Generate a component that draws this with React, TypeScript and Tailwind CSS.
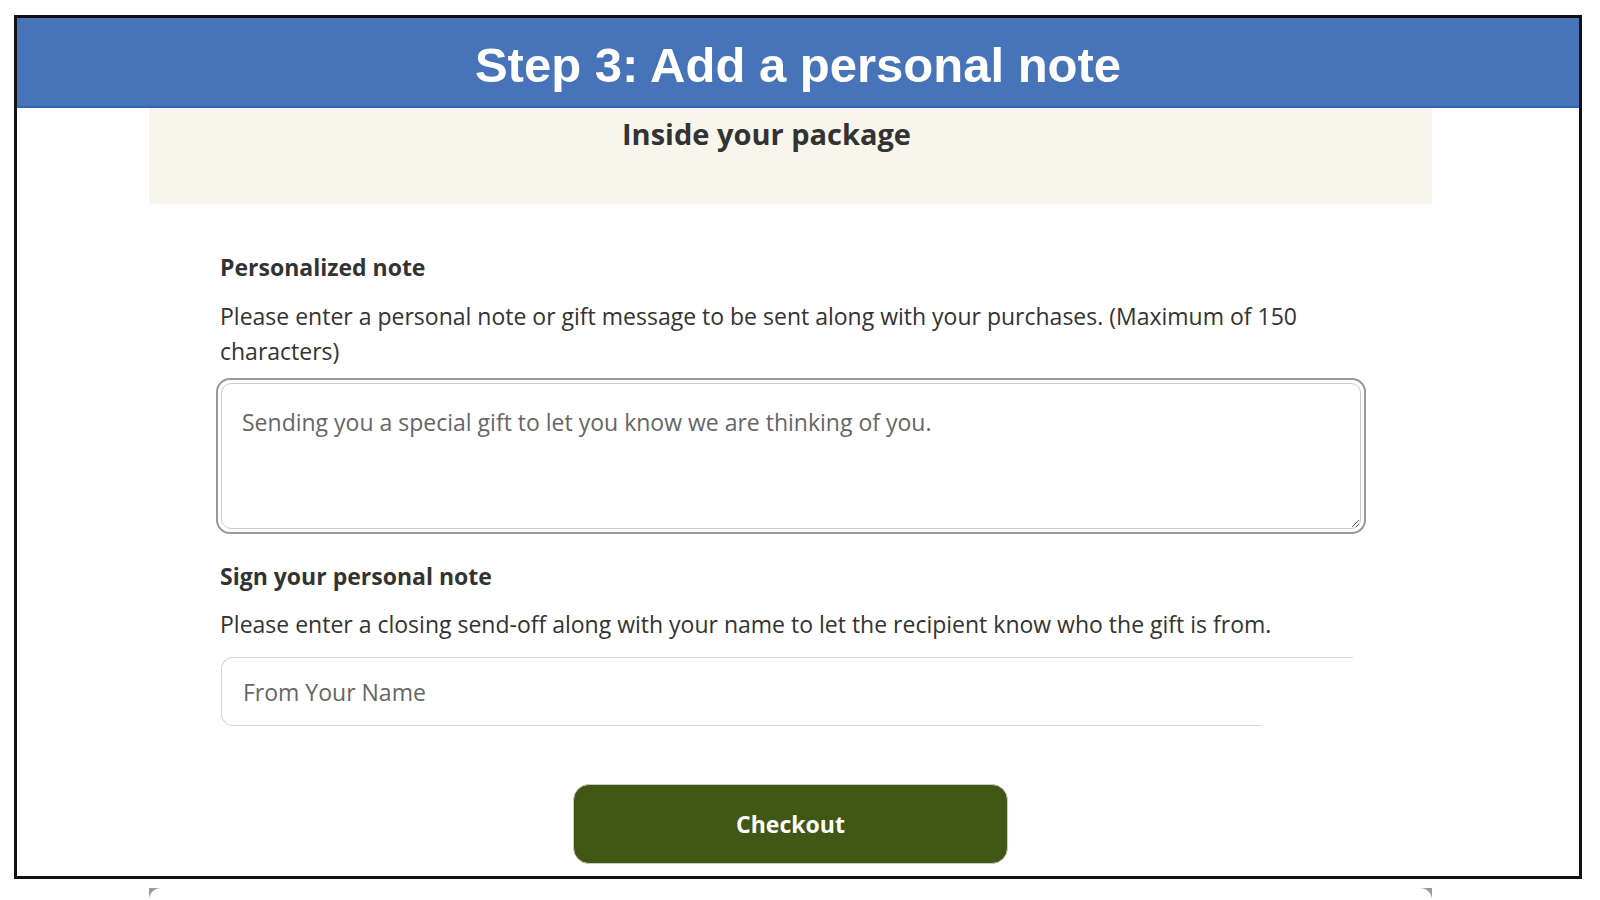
import React from "react";

const App = () => {
  return (
    <div className="w-[1600px] h-[900px] bg-white overflow-hidden pt-[15px] pl-[14px] font-['Open_Sans',sans-serif] text-[#333]">
      <div className="w-[1568px] h-[864px] border-[3px] border-[#111] flex flex-col">
        {/* header band */}
        <div className="h-[90px] bg-[#4773b9] border-b-2 border-[#2f66b6] flex items-center justify-center pt-[6px]">
          <h1 className="font-['Liberation_Sans',Arial,sans-serif] font-bold text-[49px] leading-none text-white">
            Step 3: Add a personal note
          </h1>
        </div>

        <div className="ml-[132px] w-[1283px] flex flex-col">
          <div className="h-[96px] bg-[#f8f6ec] flex justify-center pr-[48px] pt-[9px]">
            <h2 className="text-[29px] font-bold leading-[34px]">Inside your package</h2>
          </div>

          <div className="pl-[67px] flex flex-col">
            <div className="pl-[4px] mt-[48px] text-[23px] font-bold leading-[30px]">Personalized note</div>
            <p className="pl-[4px] mt-[17px] text-[23px] leading-[35px] w-[1130px]">
              Please enter a personal note or gift message to be sent along with your purchases. (Maximum of 150
              characters)
            </p>

            <div className="mt-[9px] w-[1150px] h-[156px] border-2 border-[#999] rounded-[14px] p-[3px]">
              <textarea
                className="w-full h-full border border-[#ccc] rounded-[10px] pl-[20px] pt-[23px] text-[23px] leading-[30px] text-[#555] placeholder:text-[#666] outline-none font-['Open_Sans',sans-serif]"
                placeholder="Sending you a special gift to let you know we are thinking of you."
              />
            </div>

            <div className="pl-[4px] mt-[27px] text-[23px] font-bold leading-[30px]">Sign your personal note</div>
            <p className="pl-[4px] mt-[16px] text-[23px] leading-[35px]">
              Please enter a closing send-off along with your name to let the recipient know who the gift is from.
            </p>

            <div className="relative mt-[15px] ml-[5px] w-[1132px] h-[69px] border border-r-0 border-[#d6d6d6] rounded-l-[12px] flex items-center">
              <input
                className="w-full h-full bg-transparent pl-[21px] text-[23px] text-[#555] placeholder:text-[#666] outline-none font-['Open_Sans',sans-serif]"
                placeholder="From Your Name"
              />
              <span className="absolute right-0 bottom-[-1px] h-[2px] w-[92px] bg-white" />
            </div>
          </div>

          <div className="mt-[58px] flex justify-center">
            <button className="w-[435px] h-[80px] rounded-[16px] bg-[#415716] border border-[#c8c8c8] text-white text-[23px] font-bold">
              Checkout
            </button>
          </div>
        </div>
      </div>

      {/* edge of the page card peeking under the frame */}
      <div className="mt-[9px] ml-[135px] w-[1283px] h-[12px] bg-[#9a9a9a]">
        <div className="w-full h-full bg-white rounded-t-[14px]" />
      </div>
    </div>
  );
};

export default App;
